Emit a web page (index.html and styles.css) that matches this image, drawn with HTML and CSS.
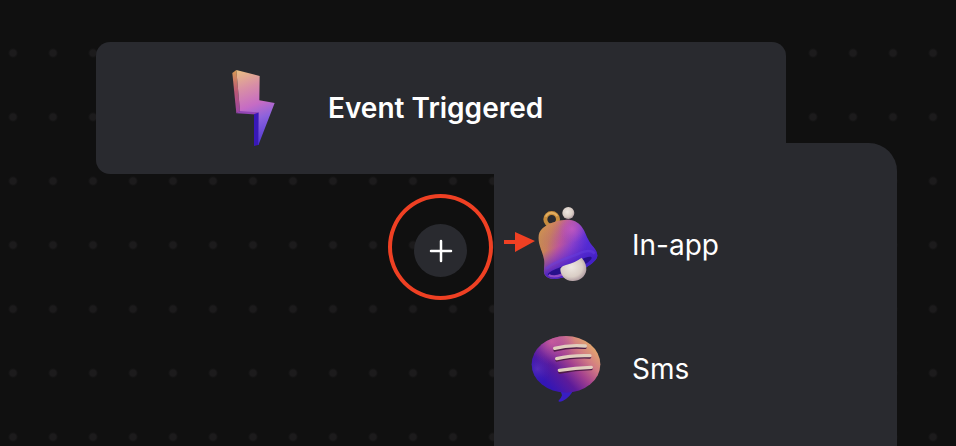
FILE: index.html
```html
<!DOCTYPE html>
<html lang="en">
<head>
    <meta charset="UTF-8">
    <meta name="viewport" content="width=device-width, initial-scale=1.0">
    <title>Workflow Editor</title>
    <link rel="stylesheet" href="styles.css">
</head>
<body>

    <main class="canvas">
        <section class="node">
            <svg class="node-icon" viewBox="48 42 168 264" aria-hidden="true">
                <defs>
                    <linearGradient id="bolt-face" gradientUnits="userSpaceOnUse" x1="85" y1="62" x2="165" y2="270">
                        <stop offset="0" stop-color="#e9bd83"/>
                        <stop offset=".25" stop-color="#d88fa5"/>
                        <stop offset=".5" stop-color="#c66cc4"/>
                        <stop offset=".7" stop-color="#8d62dc"/>
                        <stop offset="1" stop-color="#553bd5"/>
                    </linearGradient>
                    <linearGradient id="bolt-side" x1="0" y1="0" x2="0" y2="1">
                        <stop offset="0" stop-color="#d89b55"/>
                        <stop offset=".5" stop-color="#b95775"/>
                        <stop offset="1" stop-color="#9c45a5"/>
                    </linearGradient>
                </defs>
                <path d="M67 69L79 60L90 184L79 190Z" fill="url(#bolt-side)"/>
                <path d="M79 190L91 182L149 184L145 194Z" fill="#9246b4"/>
                <path d="M132 193L149 186L147 284L132 288Z" fill="#3818b8"/>
                <path d="M79 60L149 78L148 151L194 159L145 286L146 187L90 183Z" fill="url(#bolt-face)"/>
            </svg>
            <h1 class="node-title">Event Triggered</h1>
        </section>

        <button class="add-button" type="button" aria-label="Add step">
            <svg viewBox="0 0 24 24" width="24" height="24" aria-hidden="true">
                <path d="M12 2V22M2 12H22" stroke="#fff" stroke-width="2.500" stroke-linecap="round"/>
            </svg>
        </button>

        <nav class="menu" aria-label="Channels">
            <button class="menu-item" type="button">
                <svg class="menu-icon" viewBox="48 30 240 240" aria-hidden="true">
                    <defs>
                        <linearGradient id="bell-body" gradientUnits="userSpaceOnUse" x1="88" y1="125" x2="225" y2="172">
                            <stop offset="0" stop-color="#cd9447"/>
                            <stop offset=".2" stop-color="#c98158"/>
                            <stop offset=".45" stop-color="#bb559d"/>
                            <stop offset=".7" stop-color="#8a41cb"/>
                            <stop offset="1" stop-color="#4929d8"/>
                        </linearGradient>
                        <linearGradient id="bell-shade" gradientUnits="userSpaceOnUse" x1="130" y1="85" x2="178" y2="215">
                            <stop offset="0" stop-color="#d98a68" stop-opacity=".3"/>
                            <stop offset=".5" stop-color="#7a35cc" stop-opacity="0"/>
                            <stop offset="1" stop-color="#431fc4" stop-opacity=".9"/>
                        </linearGradient>
                        <radialGradient id="bell-glow" gradientUnits="userSpaceOnUse" cx="186" cy="102" r="42">
                            <stop offset="0" stop-color="#c45ac4" stop-opacity=".8"/>
                            <stop offset="1" stop-color="#b04fc0" stop-opacity="0"/>
                        </radialGradient>
                        <radialGradient id="pearl" cx=".42" cy=".4" r=".65">
                            <stop offset="0" stop-color="#eee8e2"/>
                            <stop offset=".65" stop-color="#d9cdc5"/>
                            <stop offset="1" stop-color="#a8939b"/>
                        </radialGradient>
                        <path id="bell" d="M86 125C87 92 136 75 170 74C212 74 222 105 234 132C242 152 262 162 262 182C261 204 201 237 149 250C122 256 103 247 102 231C101 217 105 209 102 193C98 170 84 150 86 125Z"/>
                    </defs>
                    <circle cx="125" cy="73" r="19" fill="none" stroke="#c78c3d" stroke-width="12"/>
                    <path d="M107 65A20 20 0 0 1 142 63" fill="none" stroke="#e2af61" stroke-width="5"/>
                    <use href="#bell" fill="url(#bell-body)"/>
                    <use href="#bell" fill="url(#bell-shade)"/>
                    <use href="#bell" fill="url(#bell-glow)"/>
                    <circle cx="175" cy="54" r="18" fill="url(#pearl)"/>
                    <path d="M114 240C112 226 165 213 205 197C229 186 246 181 245 190C238 208 158 247 126 247Q117 246 114 240Z" fill="#28108b"/>
                    <path d="M108 222C126 203 164 193 204 177C225 167 244 164 254 176" fill="none" stroke="#6541e0" stroke-width="8" opacity=".45"/>
                    <path d="M116 240Q131 249 156 239" fill="none" stroke="#8f4bc4" stroke-width="7"/>
                    <path d="M229 225C226 246 208 259 187 258C165 257 150 240 151 221Q155 212 170 209Q195 203 215 188Q230 205 229 225Z" fill="url(#pearl)"/>
                </svg>
                <span>In-app</span>
            </button>

            <button class="menu-item" type="button">
                <svg class="menu-icon" viewBox="18 12 240 240" aria-hidden="true">
                    <defs>
                        <linearGradient id="bubble" gradientUnits="userSpaceOnUse" x1="225" y1="60" x2="88" y2="185">
                            <stop offset="0" stop-color="#e5ae6b"/>
                            <stop offset=".25" stop-color="#d27b83"/>
                            <stop offset=".48" stop-color="#a4418f"/>
                            <stop offset=".72" stop-color="#5d1b9a"/>
                            <stop offset="1" stop-color="#3416b5"/>
                        </linearGradient>
                        <radialGradient id="bubble-glow" gradientUnits="userSpaceOnUse" cx="95" cy="50" r="70">
                            <stop offset="0" stop-color="#cf62a0" stop-opacity=".8"/>
                            <stop offset="1" stop-color="#a144b0" stop-opacity="0"/>
                        </radialGradient>
                        <radialGradient id="bubble-edge" gradientUnits="userSpaceOnUse" cx="52" cy="132" r="42">
                            <stop offset="0" stop-color="#7240c4" stop-opacity=".5"/>
                            <stop offset="1" stop-color="#4b24b4" stop-opacity="0"/>
                        </radialGradient>
                    </defs>
                    <path d="M121 195L126 211Q123 221 115 228Q117 233 128 228Q151 216 160 195Z" fill="#391ec3"/>
                    <ellipse cx="138" cy="118" rx="103" ry="85" fill="url(#bubble)"/>
                    <ellipse cx="138" cy="118" rx="103" ry="85" fill="url(#bubble-glow)"/>
                    <ellipse cx="138" cy="118" rx="103" ry="85" fill="url(#bubble-edge)"/>
                    <g fill="none" stroke-width="10" stroke-linecap="round">
                        <path d="M105 75Q145 63 195 67M111 105Q154 94 209 96M119 141Q166 132 213 131" stroke="#511c48"/>
                        <path d="M104 70Q145 59 196 63M110 101Q154 90 210 92M118 136Q166 128 214 127" stroke="#e1cebd"/>
                    </g>
                </svg>
                <span>Sms</span>
            </button>
        </nav>

        <!-- highlight ring around the add button and arrow to the menu -->
        <div class="ring"></div>
        <svg class="arrow" viewBox="0 0 31 20" aria-hidden="true">
            <path d="M0 8L11 8V0L31 9L11 20V12H0Z" fill="#ef4023"/>
        </svg>
    </main>

</body>
</html>
```
FILE: styles.css
```css
body {
    font-family: Inter, "Open Sans", sans-serif;
    background-color: #101010;
    color: #fff;
    margin: 0;
}

.canvas {
    position: relative;
    min-height: 100vh;
    overflow: hidden;
    background-image: radial-gradient(circle, #1c1b1c 3px, transparent 5px);
    background-size: 40px 64px;
    background-position: -7px 21px;
}

.node {
    position: absolute;
    left: 96px;
    top: 42px;
    box-sizing: border-box;
    width: 690px;
    height: 132px;
    padding-left: 130px;
    display: flex;
    align-items: center;
    gap: 46px;
    background-color: #292a2f;
    border-radius: 14px;
}

.node-icon {
    width: 56px;
    height: 88px;
}

.node-title {
    margin: 0;
    font-size: 28px;
    line-height: 40px;
    font-weight: 600;
}

button {
    border: none;
    padding: 0;
    font-family: inherit;
    color: inherit;
    cursor: pointer;
}

.add-button {
    position: absolute;
    left: 414px;
    top: 224px;
    width: 53px;
    height: 53px;
    display: flex;
    align-items: center;
    justify-content: center;
    background-color: #292a2f;
    border-radius: 50%;
}

.menu {
    position: absolute;
    left: 494px;
    top: 143px;
    bottom: 0;
    box-sizing: border-box;
    width: 403px;
    padding: 62px 32px 0;
    display: flex;
    flex-direction: column;
    gap: 44px;
    background-color: #292a2f;
    border-radius: 0 28px 0 0;
}

.menu-item {
    display: flex;
    align-items: center;
    gap: 26px;
    background: none;
    font-size: 28px;
    line-height: 40px;
}

.menu-icon {
    width: 80px;
    height: 80px;
}

.ring {
    position: absolute;
    left: 388px;
    top: 194px;
    box-sizing: border-box;
    width: 105px;
    height: 106px;
    border: 4px solid #ef4023;
    border-radius: 50%;
    pointer-events: none;
}

.arrow {
    position: absolute;
    left: 504px;
    top: 232px;
    width: 31px;
    height: 20px;
}
```
